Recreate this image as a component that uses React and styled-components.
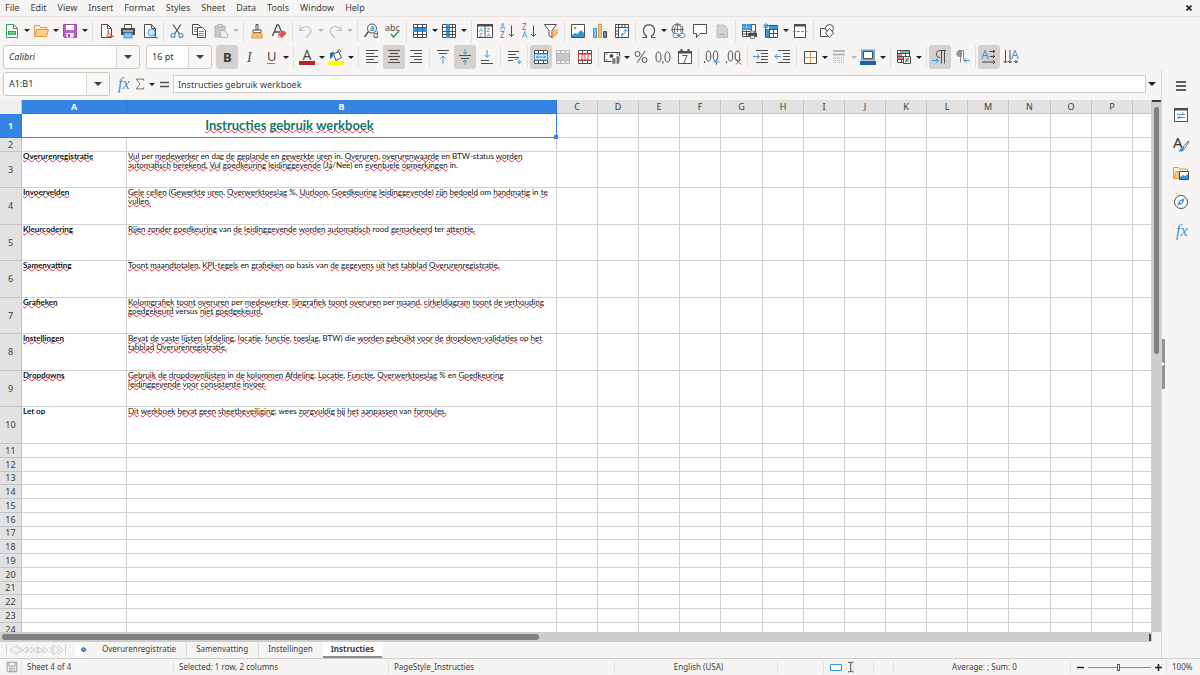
import React from "react";
import styled, { createGlobalStyle, css } from "styled-components";

const INK = "#4d4d4d";
const BLUE = "#3a96d8";
const ORANGE = "#e8973a";
const RED = "#dd3b3b";
const PURPLE = "#a345b8";

const caretPath = "M0 0h6l-3 3z";

// 16x16 drawings, keyed by command
const ICONS = {
  new: (
    <>
      <path d="M2.5 1.5h7l4 4v9h-11z" fill="#fff" stroke="#31a354" />
      <path d="M9.5 1.5v4h4" fill="none" stroke="#31a354" />
      <path d="M4 8h8v4H4z" fill="#31a354" />
      <path d="M5 9.5h6M5 11h6" stroke="#bfe8cb" strokeWidth=".6" />
    </>
  ),
  open: (
    <>
      <path d="M1.5 13.5v-11h5l1 2h6v3" fill="#fdf0dc" stroke={ORANGE} />
      <path d="M3.5 6.5h12l-2 7h-12z" fill="#f8cd8c" stroke={ORANGE} />
    </>
  ),
  save: (
    <>
      <path d="M1.5 1.5h13v13h-12l-1-1z" fill="#b765c9" stroke={PURPLE} />
      <path d="M4 2h8v5H4z" fill="#fff" />
      <path d="M4.5 10h7v4.5h-7z" fill="#fff" />
      <path d="M6 11h2v3H6z" fill={PURPLE} />
    </>
  ),
  pdf: (
    <>
      <path d="M3.5 1.5h6l4 4v9h-10z" fill="#fff" stroke={INK} />
      <path d="M9.5 1.5v4h4" fill="none" stroke={INK} />
      <path d="M7 15c3-2 3.5-5 3-7.5 0 3 2.5 5 5.5 6-3-.6-6 .4-8.500 1.500z" fill="#fff" stroke={RED} />
    </>
  ),
  print: (
    <>
      <path d="M4.500 5V1.500h7V5" fill="#fff" stroke={INK} />
      <path d="M1 5h14v7H1z" fill={INK} />
      <path d="M3 8h10" stroke="#fff" />
      <path d="M4 10h8v5H4z" fill="#8fc8ef" stroke={BLUE} />
    </>
  ),
  preview: (
    <>
      <path d="M2.500 1.500h7l4 4v9h-11z" fill="#fff" stroke={INK} />
      <path d="M9.500 1.500v4h4" fill="none" stroke={INK} />
      <circle cx="9.500" cy="9.500" r="3.500" fill="#cfe8fa" stroke={BLUE} />
      <path d="M12 12l3.500 3.500" stroke={BLUE} strokeWidth="1.400" />
    </>
  ),
  cut: (
    <>
      <path d="M4 1.500l6.500 9.500M12 1.500L5.500 11" fill="none" stroke={INK} strokeWidth="1.200" />
      <circle cx="4" cy="12.500" r="2" fill="none" stroke={BLUE} strokeWidth="1.200" />
      <circle cx="12" cy="12.500" r="2" fill="none" stroke={BLUE} strokeWidth="1.200" />
    </>
  ),
  copy: (
    <>
      <path d="M1.500 1.500h6l2 2v8h-8z" fill="#fff" stroke={INK} />
      <path d="M3 4.500h3M3 6.500h3M3 8.500h3" stroke={BLUE} />
      <path d="M6.500 4.500h5l3 3v7h-8z" fill="#fff" stroke={INK} />
      <path d="M8 8.500h5M8 10.500h5M8 12.500h5" stroke={BLUE} />
    </>
  ),
  paste: (
    <>
      <path d="M2 3h10v11H2z" fill="#c9c9c9" stroke="#b0b0b0" />
      <path d="M5 1.500h4V4H5z" fill="#eee" stroke="#b0b0b0" />
      <path d="M7.500 7.500h4l3 3v4h-7z" fill="#eee" stroke="#b5b5b5" />
    </>
  ),
  brush: (
    <>
      <path d="M7 1.500h2V7H7z" fill="#fff" stroke={INK} />
      <path d="M4 7h8v2.500H4z" fill="#fff" stroke={INK} />
      <path d="M3.500 10h9l1 5h-11z" fill="#f7be78" stroke={ORANGE} />
    </>
  ),
  clear: (
    <>
      <path d="M1.500 13L6 2h1.500L11 10M3 9h6" fill="none" stroke={INK} strokeWidth="1.300" />
      <path d="M7.500 11.500l5-3.500 2.500 2.500-4.500 4z" fill="#e8505b" stroke={RED} />
      <path d="M7.500 11.500l3 3-1 .8H7.500l-1.500-1.500z" fill="#f5b5ba" />
    </>
  ),
  undo: (
    <path d="M2 2.500v5h5M2.500 7C5 3 9 2.500 11.500 5s2 5-3.500 9.500" fill="none" stroke="#c2c2c2" strokeWidth="1.200" />
  ),
  redo: (
    <path d="M14 2.500v5H9M13.500 7C11 3 7 2.500 4.500 5s-2 5 3.500 9.500" fill="none" stroke="#c2c2c2" strokeWidth="1.200" />
  ),
  find: (
    <>
      <circle cx="9" cy="5.500" r="4.500" fill="#fff" stroke={INK} />
      <path d="M5.500 8.500L1.500 14" stroke={INK} strokeWidth="1.500" />
      <text x="6.700" y="8" fontSize="8" fill={BLUE} fontWeight="bold">a</text>
      <text x="10" y="15" fontSize="9" fill={INK}>d</text>
    </>
  ),
  spell: (
    <>
      <text x="0" y="7.500" fontSize="9" fill={INK}>abc</text>
      <path d="M6 11l2.500 3L14 8" fill="none" stroke="#2f9e5b" strokeWidth="1.500" />
    </>
  ),
  row: (
    <>
      <path d="M1.500 1.500h13v13h-13zM5.500 1.500v13M10.500 1.500v13M1.500 4.500h13M1.500 11.500h13" fill="#fff" stroke={INK} />
      <path d="M1 5h14v4H1z" fill={BLUE} />
      <path d="M5.500 5v4M10.500 5v4" stroke="#1e6aa8" />
    </>
  ),
  column: (
    <>
      <path d="M1.500 1.500h13v13h-13zM1.500 4.500h13M1.500 8.500h13M1.500 11.500h13M11.500 1.500v13" fill="#fff" stroke={INK} />
      <path d="M5 1h4v14H5z" fill={BLUE} />
      <path d="M5 4.500h4M5 8.500h4M5 11.500h4" stroke="#1e6aa8" />
    </>
  ),
  sort: (
    <>
      <path d="M.5 1.500h15v13H.5zM8 3v11" fill="#fff" stroke={INK} />
      <path d="M0 1h16v2.500H0z" fill={INK} />
      <text x="2" y="9" fontSize="6" fill={BLUE}>A</text>
      <text x="2" y="14" fontSize="6" fill={PURPLE}>Z</text>
      <text x="9.500" y="9" fontSize="6" fill={PURPLE}>Z</text>
      <text x="9.500" y="14" fontSize="6" fill={BLUE}>A</text>
    </>
  ),
  asc: (
    <>
      <text x="1" y="7" fontSize="8" fill={BLUE}>A</text>
      <text x="1" y="15" fontSize="8" fill={PURPLE}>Z</text>
      <path d="M12.500 2.500v11M10 11l2.500 2.500L15 11" fill="none" stroke={INK} />
    </>
  ),
  desc: (
    <>
      <text x="1" y="7" fontSize="8" fill={PURPLE}>Z</text>
      <text x="1" y="15" fontSize="8" fill={BLUE}>A</text>
      <path d="M12.500 2.500v11M10 11l2.500 2.500L15 11" fill="none" stroke={INK} />
    </>
  ),
  filter: (
    <>
      <path d="M1.500 1.500h12L9 7.500v7l-3-2v-5z" fill="#fff" stroke={INK} />
      <path d="M11 7h4l-2 3h2l-6 5.500 2-4H9z" fill="#f9c67f" stroke={ORANGE} strokeWidth=".7" />
    </>
  ),
  image: (
    <>
      <path d="M1.500 1.500h13v13h-13z" fill="#fff" stroke={INK} />
      <circle cx="5" cy="5" r="1.500" fill={ORANGE} />
      <path d="M2 14v-2l3-2 2 1 4-4 3 3v4z" fill={BLUE} />
    </>
  ),
  chart: (
    <>
      <path d="M1.500 5.500h3v9h-3z" fill="#8cc4ec" stroke={BLUE} />
      <path d="M6.500 1.500h3v13h-3z" fill="#f9c67f" stroke={ORANGE} />
      <path d="M11.500 8.500h3v6h-3z" fill="#888" stroke={INK} />
    </>
  ),
  pivot: (
    <>
      <path d="M1.500 1.500h13v13h-13zM4.500 1.500v13M1.500 4.500h13M8 1.500v3M11 1.500v3M1.500 8h3M1.500 11h3" fill="#fff" stroke={INK} />
      <path d="M7 12c3 0 4.500-1.500 4.500-5M9.500 8.500l2-2 2 2M9 10l-2 2 2 2" fill="none" stroke={BLUE} />
    </>
  ),
  omega: (
    <path d="M1.500 14.500h4v-1.500C.5 9.500 2 1.800 8 1.800S15.500 9.500 10.500 13v1.500h4" fill="none" stroke={INK} strokeWidth="1.200" />
  ),
  link: (
    <>
      <circle cx="7.500" cy="6.500" r="5.500" fill="#fff" stroke={INK} />
      <path d="M7.500 1v8M2 6.500h11M7.500 1c-4 3-4 8-1 11M7.500 1c4 3 4 6 3 8" fill="none" stroke={INK} strokeWidth=".8" />
      <rect x="3" y="10.500" width="6" height="4" rx="2" fill="#fff" stroke={BLUE} />
      <rect x="9" y="10.500" width="6" height="4" rx="2" fill="#fff" stroke={BLUE} />
      <path d="M6.500 12.500h5" stroke={BLUE} />
    </>
  ),
  comment: <path d="M1.500 1.500h13v9H8l-3.500 4v-4h-3z" fill="#fff" stroke={INK} />,
  header: (
    <>
      <path d="M3 2h7l3.500 3.500V14.500H3z" fill="#d2d2d2" stroke="#bcbcbc" />
      <path d="M5 11.500h6" stroke="#aaa" />
    </>
  ),
  printArea: (
    <>
      <path d="M1.500 1.500h13v12h-13zM5.500 1.500v12M10.500 1.500v12M1.500 8.500h13M1.500 11h13" fill="#fff" stroke={INK} />
      <path d="M1 1h9.500v6H1z" fill={BLUE} />
      <path d="M1 4h9.500M5.500 1v6" stroke="#b7dcf5" strokeWidth=".6" />
      <path d="M7 10h9v4H7z" fill={INK} />
      <path d="M9.500 8h4v2h-4zM9.500 12.500h4v3h-4z" fill="#cfe8fa" stroke={INK} strokeWidth=".6" />
    </>
  ),
  freeze: (
    <>
      <path d="M2.500 2.500h12v12h-12zM6.500 2.500v12M10.500 2.500v12M2.500 6.500h12M2.500 10.500h12" fill="#fff" stroke={INK} />
      <path d="M6 3h8.500v3H6zM3 6h3v8.500H3z" fill={BLUE} />
      <path d="M3 0v6M0 3h6M1 1l4 4M5 1L1 5" stroke={BLUE} />
    </>
  ),
  splitWin: (
    <>
      <path d="M2.500 2v12.500h11V2" fill="#fff" stroke={INK} />
      <path d="M2 1h12v2.500H2z" fill={INK} />
      <path d="M1 8.500h14" stroke={BLUE} strokeDasharray="3 1" />
    </>
  ),
  shapes: (
    <>
      <path d="M1.500 5.500h7v8h-7z" fill="#fff" stroke={INK} />
      <circle cx="10.500" cy="5.500" r="4" fill="#fff" stroke={INK} />
      <path d="M10.500 5.500l4 4.500-4 4.500-4-4.500z" fill="#fff" stroke={INK} />
    </>
  ),
  bold: <text x="4" y="13" fontSize="13" fontWeight="bold" fill="#3a3a3a">B</text>,
  italic: <text x="6" y="13" fontSize="14" fontStyle="italic" fontFamily="Liberation Serif, serif" fill={INK}>I</text>,
  underline: (
    <>
      <text x="4" y="12" fontSize="13" fill={INK}>U</text>
      <path d="M4 14.500h8" stroke={BLUE} />
    </>
  ),
  fontColor: (
    <>
      <text x="3.500" y="10.500" fontSize="14" fill={INK}>A</text>
      <path d="M0 12h16v4H0z" fill="#c02020" />
    </>
  ),
  highlight: (
    <>
      <path d="M5.500 5l5-2.500 3 6-5.500 3z" fill="#fff" stroke={INK} />
      <path d="M10 4V2c0-2 3-1.500 3 1" fill="none" stroke={INK} />
      <path d="M2 10V4l4-1.500L4.500 8z" fill="#1e6aa8" />
      <path d="M0 12h16v4H0z" fill="#ffff00" />
    </>
  ),
  alignLeft: <path d="M2 1.500h12M2 4.500h8M2 7.500h12M2 10.500h8M2 13.500h12" stroke={INK} />,
  alignCenter: <path d="M2 1.500h12M4 4.500h8M2 7.500h12M4 10.500h8M2 13.500h12" stroke={INK} />,
  alignRight: <path d="M2 1.500h12M6 4.500h8M2 7.500h12M6 10.500h8M2 13.500h12" stroke={INK} />,
  alignTop: (
    <>
      <path d="M2 1.500h12M4 4.500h8" stroke={INK} />
      <path d="M8 14.500V7M5.500 9.500L8 7l2.500 2.500" fill="none" stroke={BLUE} />
    </>
  ),
  alignMiddle: (
    <>
      <path d="M2 6.500h12M4 9.500h8" stroke={INK} />
      <path d="M8 0v5M6 3l2 2 2-2M8 16v-5M6 13l2-2 2 2" fill="none" stroke={BLUE} />
    </>
  ),
  alignBottom: (
    <>
      <path d="M2 14.500h12M2 11.500h8" stroke={INK} />
      <path d="M8 1v7M5.500 6L8 8.500 10.500 6" fill="none" stroke={BLUE} />
    </>
  ),
  wrap: (
    <>
      <path d="M2 2.500h11M2 5.500h8M2 8.500h11M2 11.500h5" stroke={INK} />
      <path d="M8.500 10.500c4-1 5 0 5 4M11 12.500l2.500 2 2-2.500" fill="none" stroke={BLUE} />
    </>
  ),
  merge: (
    <>
      <path d="M1.500 1.500h13v13h-13zM5.500 1.500v3M10.500 1.500v3M5.500 11.500v3M10.500 11.500v3M1.500 4.500h13M1.500 11.500h13" fill="#fff" stroke={INK} />
      <path d="M1.500 5h13v6h-13z" fill="#d8edfb" stroke={BLUE} />
      <path d="M3 8h10M5 6.500L3.500 8 5 9.500M11 6.500L12.500 8 11 9.500" fill="none" stroke={BLUE} />
    </>
  ),
  unmerge: (
    <>
      <path d="M1.500 1.500h13v13h-13zM5.500 1.500v3M10.500 1.500v3M5.500 11.500v3M10.500 11.500v3M1.500 4.500h13M1.500 11.500h13" fill="#eee" stroke="#b5b5b5" />
      <path d="M2 5h12v6H2z" fill="#c8c8c8" />
    </>
  ),
  splitCells: (
    <>
      <path d="M1.500 1.500h13v13h-13zM5.500 1.500v13M10.500 1.500v13M1.500 4.500h13M1.500 11.500h13" fill="#fff" stroke={INK} />
      <path d="M1.500 5h13v6h-13zM5 5v6M8 5v6M11 5v6" fill="#fff" stroke={RED} />
    </>
  ),
  currency: (
    <>
      <path d="M.5 3.500h15v9H.5z" fill="#fff" stroke={INK} strokeWidth="1.200" />
      <path d="M2 5h1.500M12.500 5H14M2 11h1.500" stroke={INK} />
      <circle cx="7.500" cy="7" r="2" fill={INK} />
      <path d="M8 9h4v6H8zM12 7h3.500v8H12z" fill="#777" stroke="#f6f5f4" strokeWidth=".6" />
    </>
  ),
  percent: (
    <>
      <circle cx="4.500" cy="5" r="2.500" fill="none" stroke={INK} />
      <circle cx="11.500" cy="11" r="2.500" fill="none" stroke={INK} />
      <path d="M12 2L4 14" stroke={INK} />
    </>
  ),
  number: (
    <>
      <ellipse cx="3.500" cy="8" rx="2.500" ry="5" fill="none" stroke={INK} />
      <ellipse cx="12.500" cy="8" rx="2.500" ry="5" fill="none" stroke={INK} />
      <path d="M8 12v2.500" stroke={INK} />
    </>
  ),
  date: (
    <>
      <path d="M1.500 2.500h13v12h-13z" fill="#fff" stroke={INK} />
      <path d="M1 2h14v2.500H1zM3.500 0h2v3h-2zM10.500 0h2v3h-2z" fill={INK} />
      <text x="5" y="13.500" fontSize="10" fill={INK}>7</text>
    </>
  ),
  addDec: (
    <>
      <path d="M.5 12v2" stroke={INK} />
      <ellipse cx="4.500" cy="7" rx="2.300" ry="5" fill="none" stroke={INK} />
      <ellipse cx="11.500" cy="7" rx="2.300" ry="5" fill="none" stroke={INK} />
      <path d="M12.500 10v6M9.500 13h6" stroke={BLUE} />
    </>
  ),
  delDec: (
    <>
      <path d="M.5 12v2" stroke={INK} />
      <ellipse cx="4.500" cy="7" rx="2.300" ry="5" fill="none" stroke={INK} />
      <ellipse cx="11.500" cy="7" rx="2.300" ry="5" fill="none" stroke={INK} />
      <path d="M10 10l5 5.500M15 10l-5 5.500" stroke={RED} />
    </>
  ),
  indent: (
    <>
      <path d="M3 1.500h12M8 4.500h7M8 7.500h7M8 10.500h7M3 13.500h12" stroke={INK} />
      <path d="M0 7.500h6M4 5l2.500 2.500L4 10" fill="none" stroke={BLUE} />
    </>
  ),
  outdent: (
    <>
      <path d="M3 1.500h12M8 4.500h7M8 7.500h7M8 10.500h7M3 13.500h12" stroke={INK} />
      <path d="M6 7.500H0M2.500 5L0 7.500 2.500 10" fill="none" stroke={BLUE} />
    </>
  ),
  borders: (
    <>
      <path d="M2.500 2.500h12v12h-12z" fill="#fff" stroke={INK} />
      <path d="M8.500 3v11M3 8.500h11" stroke={ORANGE} />
    </>
  ),
  lineStyle: (
    <>
      <path d="M2 2h12M2 5.500h12" stroke="#b5b5b5" strokeWidth="2" />
      <path d="M2 9h12" stroke="#b5b5b5" strokeDasharray="3 1" />
      <path d="M2 11.500h12M2 13.500h12" stroke="#b5b5b5" strokeDasharray="1 1" />
    </>
  ),
  lineColor: (
    <>
      <path d="M2 1.500h12v9H2z" fill="#fff" stroke="#6aa5d6" strokeWidth="2" />
      <path d="M3.500 2.500h9v7h-9z" fill="#fff" stroke={INK} />
      <path d="M0 12h16v4H0z" fill="#1f5f9e" />
    </>
  ),
  conditional: (
    <>
      <path d="M1.500 1.500h12v12h-12zM5.500 1.500v12M9.500 1.500v12M1.500 4.500h12M1.500 7.500h12M1.500 10.500h12" fill="#fff" stroke={INK} />
      <path d="M4 2h9v2H4z" fill="#6cc08b" />
      <path d="M2 5h4v2H2zM2 8h5v2H2z" fill="#ef7d7d" />
      <path d="M7.500 7.500h7v7h-7z" fill="#fff" stroke={INK} />
      <path d="M9 10h4M9 12h4M12.500 8.500l-3 5" stroke={INK} strokeWidth=".8" />
    </>
  ),
  ltr: (
    <>
      <path d="M8 8.500c-5 0-5-7 0-7h6M9.500 1.500v13M12.500 1.500v13" fill="none" stroke={INK} />
      <path d="M0 11.500h6M4 9l2.500 2.500L4 14" fill="none" stroke={BLUE} />
    </>
  ),
  rtl: (
    <>
      <path d="M6 8C1 8 1 1.500 6 1.500h2V8z" fill="#999" />
      <path d="M4 1.500h6M6.500 1.500v12M9.500 1.500v9" fill="none" stroke="#8a8a8a" />
      <path d="M16 11.500h-6M12.500 9L10 11.500l2.500 2.500" fill="none" stroke={BLUE} />
    </>
  ),
  textLtr: (
    <>
      <text x="0" y="10" fontSize="12" fill={BLUE}>A</text>
      <path d="M8.500 2.500H14M12 1l2 1.500L12 4M8.500 7.500H14M12 6l2 1.500L12 9M1 13h13M12 11l2 2-2 2" fill="none" stroke={INK} />
    </>
  ),
  textTtb: (
    <>
      <text x="8" y="10" fontSize="12" fill={BLUE}>A</text>
      <path d="M2.500 1v13M.5 12l2 2 2-2M7 1v13M5 12l2 2 2-2M13 11v3M11 12l2 2 2-2" fill="none" stroke={INK} />
    </>
  ),
  fx: (
    <text x="3" y="13" fontSize="16" fontStyle="italic" fontFamily="Liberation Serif, serif" fill={BLUE}>fx</text>
  ),
  sigma: <path d="M13 3.500v-2H3L8 8l-5 6.500h10v-2" fill="none" stroke={INK} />,
  equals: <path d="M4 6.500h9M4 10.500h9" stroke={INK} strokeWidth="1.600" />,
  burger: <path d="M3 4h10M3 8h10M3 12h10" stroke="#2e2e2e" strokeWidth="1.600" />,
  properties: (
    <>
      <path d="M1.500 1.500h13v13h-13z" fill="#fff" stroke={INK} />
      <path d="M1 1h14v2.500H1z" fill={INK} />
      <path d="M4 7.500h8M4 10.500h8M10 5.500l-1 3M7 9l-1.500 3" stroke={BLUE} />
    </>
  ),
  stylist: (
    <>
      <text x="0" y="12" fontSize="15" fill="#333">A</text>
      <path d="M15.500 5L10 11l1.500 1.500L16 6z" fill="#fff" stroke={INK} strokeWidth=".8" />
      <path d="M5 15c2 0 2-3 4.500-3.500l2 2C10 16 7 16 5 15z" fill={BLUE} />
    </>
  ),
  gallery: (
    <>
      <path d="M.5 13.500v-11h5l1 1.500h8v3" fill="#fdf0dc" stroke={ORANGE} />
      <path d="M1 13.500l2-7h3v7z" fill="#f8cd8c" stroke={ORANGE} />
      <path d="M6.500 6.500h9v8h-9z" fill="#fff" stroke={INK} />
      <path d="M7 14v-2l3-2 2 1 3-2v5z" fill={BLUE} />
    </>
  ),
  navigator: (
    <>
      <circle cx="8" cy="8" r="6.500" fill="#fff" stroke={INK} />
      <path d="M12 4L9.500 9.500 4 12l2.500-5.500z" fill={BLUE} />
      <circle cx="8" cy="8" r="1" fill="#fff" />
    </>
  ),
  addSheet: (
    <>
      <path d="M1 1h9l3 3v11H1z" fill="#fff" />
      <path d="M11 4.500v6M8 7.500h6M9 5.500l4 4M13 5.500l-4 4" stroke="#2d62b5" strokeWidth="1.300" />
      <circle cx="11" cy="7.500" r=".9" fill="#fff" />
    </>
  ),
  saved: (
    <path d="M2.500 2.500h11v11h-10l-1-1zM4.500 2.500V7h7V2.500M5.500 13.500v-4h5v4M7.500 11v2.500" fill="none" stroke="#8f8f8f" />
  ),
  selMode: <path d="M1.500 5.500h11v6h-11z" fill="#fff" stroke={BLUE} />,
  cursor: <path d="M3.500 2.500h2l1 1 1-1h2M6.500 3v10M3.500 13.500h2l1-1 1 1h2" fill="none" stroke="#333" />,
};

const Icon = ({ name, size = 16 }) => (
  <Glyph width={size} height={size} viewBox="0 0 16 16" aria-hidden="true">
    {ICONS[name]}
  </Glyph>
);

const Caret = () => (
  <svg width="6" height="3" viewBox="0 0 6 3" aria-hidden="true">
    <path d={caretPath} fill="currentColor" />
  </svg>
);

// trailing ">" adds a drop-down arrow, "!" marks a pressed button, "~" a disabled one
const STANDARD_BAR =
  "new> open> save> | pdf print preview | cut copy paste~> | brush clear | undo~> redo~> | find spell | row> column> | sort asc desc filter | image chart pivot | omega> link comment header~ | printArea freeze> splitWin | shapes";
const FORMAT_BAR =
  "bold! italic underline> | fontColor> highlight> | alignLeft alignCenter! alignRight | alignTop alignMiddle! alignBottom | wrap | merge! unmerge~ splitCells | currency> percent number date | addDec delDec | indent outdent | borders> lineStyle~> lineColor> | conditional> | ltr! rtl | textLtr! textTtb";

const Tools = ({ spec }) =>
  spec.split(" ").map((item, i) => {
    if (item === "|") return <Separator key={i} />;
    const name = item.replace(/[^a-z]/gi, "");
    const off = item.includes("~");
    return (
      <React.Fragment key={i}>
        <ToolButton aria-label={name} $on={item.includes("!")} disabled={off}>
          <Icon name={name} />
        </ToolButton>
        {item.includes(">") && (
          <ArrowButton aria-label={`${name} options`} disabled={off}>
            <Caret />
          </ArrowButton>
        )}
      </React.Fragment>
    );
  });

const MENUS = ["File", "Edit", "View", "Insert", "Format", "Styles", "Sheet", "Data", "Tools", "Window", "Help"];
const TABS = ["Overurenregistratie", "Samenvatting", "Instellingen", "Instructies"];
const LETTERS = "CDEFGHIJKLMNOP".split("");
const WIDE = ["G", "N"];

const HELP_ROWS = [
  ["Overurenregistratie", "Vul per medewerker en dag de geplande en gewerkte uren in. Overuren, overurenwaarde en BTW-status worden\nautomatisch berekend. Vul goedkeuring leidinggevende (Ja/Nee) en eventuele opmerkingen in."],
  ["Invoervelden", "Gele cellen (Gewerkte uren, Overwerktoeslag %, Uurloon, Goedkeuring leidinggevende) zijn bedoeld om handmatig in te\nvullen."],
  ["Kleurcodering", "Rijen zonder goedkeuring van de leidinggevende worden automatisch rood gemarkeerd ter attentie."],
  ["Samenvatting", "Toont maandtotalen, KPI-tegels en grafieken op basis van de gegevens uit het tabblad Overurenregistratie."],
  ["Grafieken", "Kolomgrafiek toont overuren per medewerker, lijngrafiek toont overuren per maand, cirkeldiagram toont de verhouding\ngoedgekeurd versus niet goedgekeurd."],
  ["Instellingen", "Bevat de vaste lijsten (afdeling, locatie, functie, toeslag, BTW) die worden gebruikt voor de dropdown-validaties op het\ntabblad Overurenregistratie."],
  ["Dropdowns", "Gebruik de dropdownlijsten in de kolommen Afdeling, Locatie, Functie, Overwerktoeslag % en Goedkeuring\nleidinggevende voor consistente invoer."],
  ["Let op", "Dit werkboek bevat geen sheetbeveiliging; wees zorgvuldig bij het aanpassen van formules."],
];

// words the English spell checker accepts
const KNOWN = ["per", "en", "dag", "in", "in.", "van", "om", "op", "basis", "ter", "rood", "Nee", "versus", "BTW-status", "BTW", "die", "wees", "Let"];

const Checked = ({ text }) =>
  text
    .split(/([A-Za-z-]+\.?)/)
    .map((part, i) => (i % 2 && !KNOWN.includes(part) ? <Misspelt key={i}>{part}</Misspelt> : part));

const Fill = () => (
  <>
    {LETTERS.map(l => (
      <Cell key={l} />
    ))}
    <Cell />
  </>
);

const Sheet = () => (
  <Grid>
    <colgroup>
      <Col $w={22} />
      <Col $w={105} />
      <Col $w={430} />
      {LETTERS.map(l => (
        <Col key={l} $w={WIDE.includes(l) ? 42 : 41} />
      ))}
      <col />
    </colgroup>
    <thead>
      <Row $h={14}>
        <Corner />
        <Head $on>A</Head>
        <Head $on>B</Head>
        {LETTERS.map(l => (
          <Head key={l}>{l}</Head>
        ))}
        <Head />
      </Row>
    </thead>
    <tbody>
      <Row $h={24}>
        <Head $on>1</Head>
        <TitleCell colSpan={2}>
          <Checked text="Instructies gebruik werkboek" />
          <FillHandle />
        </TitleCell>
        <Fill />
      </Row>
      <Row $h={14}>
        <Head>2</Head>
        <Cell />
        <Cell />
        <Fill />
      </Row>
      {HELP_ROWS.map(([label, text], i) => (
        <Row key={label} $h={i % 2 ? 37 : 36}>
          <Head>{i + 3}</Head>
          <Cell $bold>
            {label === "Let op" ? label : <Checked text={label} />}
          </Cell>
          <Cell>
            <Checked text={text} />
          </Cell>
          <Fill />
        </Row>
      ))}
      {Array.from({ length: 14 }, (_, i) => (
        <Row key={i} $h={i % 4 === 2 ? 13 : 14}>
          <Head>{i + 11}</Head>
          <Cell />
          <Cell />
          <Fill />
        </Row>
      ))}
    </tbody>
  </Grid>
);

const App = () => (
  <Window>
    <GlobalStyle />
    <MenuBar>
      {MENUS.map(m => (
        <MenuItem key={m}>{m}</MenuItem>
      ))}
      <CloseButton aria-label="Close document">
        <svg width="6" height="6" viewBox="0 0 6 6">
          <path d="M.5.5l5 5M5.500.5l-5 5" stroke="#222" strokeWidth="1.600" />
        </svg>
      </CloseButton>
    </MenuBar>
    <Toolbar>
      <Tools spec={STANDARD_BAR} />
    </Toolbar>
    <FormatToolbar>
      <Combo $w={137}>
        <ComboInput aria-label="Font name" defaultValue="Calibri" $italic />
        <ComboArrow aria-label="Font list"><Caret /></ComboArrow>
      </Combo>
      <Combo $w={66}>
        <ComboInput aria-label="Font size" defaultValue="16 pt" />
        <ComboArrow aria-label="Size list"><Caret /></ComboArrow>
      </Combo>
      <Tools spec={FORMAT_BAR} />
    </FormatToolbar>
    <Body>
      <Main>
        <FormulaBar>
          <Combo $w={107}>
            <ComboInput aria-label="Name box" defaultValue="A1:B1" />
            <ComboArrow aria-label="Names"><Caret /></ComboArrow>
          </Combo>
          <FormulaTools>
            <FormulaButton aria-label="Function wizard"><Icon name="fx" /></FormulaButton>
            <FormulaButton aria-label="Select function"><Icon name="sigma" size={12} /></FormulaButton>
            <ArrowButton aria-label="Functions"><Caret /></ArrowButton>
            <FormulaButton aria-label="Formula"><Icon name="equals" /></FormulaButton>
          </FormulaTools>
          <FormulaInput aria-label="Input line" defaultValue="Instructies gebruik werkboek" />
          <ExpandButton aria-label="Expand formula bar"><Caret /></ExpandButton>
        </FormulaBar>
        <SheetArea>
          <SheetView>
            <Sheet />
          </SheetView>
          <VScroll>
            <VThumb />
          </VScroll>
        </SheetArea>
        <HScroll>
          <HThumb />
          <HStop />
        </HScroll>
        <TabBar>
          <Navs>
            <svg width="62" height="12" viewBox="0 0 62 12" fill="none" stroke="#cfcfcf" aria-hidden="true">
              <path d="M1.500 1v10M12 1L5 6l7 5V8h3V4h-3zM16 3v6M22 3l-5 3 5 3zM27 3l-5 3 5 3zM33 3l-5 3 5 3zM33 3l5 3-5 3zM38 3l5 3-5 3zM46 3v6M48 1l7 5-7 5zM53 1l5 5-5 5M60.500 1v10" />
            </svg>
          </Navs>
          <AddSheet aria-label="Add sheet"><Icon name="addSheet" size={14} /></AddSheet>
          {TABS.map(t => (
            <Tab key={t} $on={t === "Instructies"}>{t}</Tab>
          ))}
        </TabBar>
      </Main>
      <Splitter>
        <SplitterHandle aria-label="Hide sidebar">
          <svg width="3" height="4" viewBox="0 0 3 4"><path d="M0 0l3 2-3 2z" fill="#fff" /></svg>
        </SplitterHandle>
      </Splitter>
      <Sidebar>
        {["burger", "properties", "stylist", "gallery", "navigator", "fx"].map(n => (
          <SideButton key={n} aria-label={n}><Icon name={n} /></SideButton>
        ))}
      </Sidebar>
    </Body>
    <StatusBar>
      <Status $w={22}><Icon name="saved" size={14} /></Status>
      <Status $w={152}>Sheet 4 of 4</Status>
      <Status $w={215}>Selected: 1 row, 2 columns</Status>
      <Status $grow>PageStyle_Instructies</Status>
      <Status $w={163} $center>English (USA)</Status>
      <Status $w={46} />
      <Status $w={30}><Icon name="selMode" /><Icon name="cursor" size={14} /></Status>
      <Status $w={20} />
      <Status $w={20} />
      <Status $w={177} $center>Average: ; Sum: 0</Status>
      <ZoomStatus $w={96}>
        <ZoomStep aria-label="Zoom out">
          <svg width="7" height="7" viewBox="0 0 7 7"><path d="M0 3.500h7" stroke="#222" strokeWidth="1.500" /></svg>
        </ZoomStep>
        <ZoomSlider type="range" aria-label="Zoom" min="0" max="100" defaultValue="48" />
        <ZoomStep aria-label="Zoom in">
          <svg width="7" height="7" viewBox="0 0 7 7"><path d="M0 3.500h7M3.500 0v7" stroke="#222" strokeWidth="1.500" /></svg>
        </ZoomStep>
      </ZoomStatus>
      <Status $w={33} $last>100%</Status>
    </StatusBar>
  </Window>
);

export default App;

const GlobalStyle = createGlobalStyle`
  * {
    box-sizing: border-box;
  }

  body {
    margin: 0;
    background: #f6f5f4;
  }

  button,
  input {
    font: inherit;
    color: inherit;
    margin: 0;
    padding: 0;
    border: 0;
    background: none;
    outline: none;
  }
`;

const Window = styled.div`
  display: flex;
  flex-direction: column;
  height: 100vh;
  overflow: hidden;
  background: #f6f5f4;
  color: #3d3d3d;
  font-family: "Noto Sans", sans-serif;
  font-size: 9px;
  line-height: 12px;
`;

const Glyph = styled.svg`
  display: block;
  flex: none;
  overflow: visible;
  font-family: "Noto Sans", sans-serif;
`;

const MenuBar = styled.nav`
  display: flex;
  flex: none;
  gap: 1px;
  height: 17px;
  padding: 0 8px 0 0;
  border-bottom: 1px solid #e6e4e2;
`;

const MenuItem = styled.button`
  padding: 0 5px;
`;

const CloseButton = styled.button`
  display: flex;
  align-items: center;
  margin-left: auto;
`;

const Toolbar = styled.div`
  display: flex;
  flex: none;
  align-items: center;
  height: 27px;
  padding-left: 1px;
`;

const FormatToolbar = styled(Toolbar)`
  height: 26px;
`;

const ToolButton = styled.button`
  display: flex;
  flex: none;
  align-items: center;
  justify-content: center;
  width: 22px;
  height: 24px;
  border-radius: 3px;
  background: ${p => (p.$on ? "#d5d1ce" : "transparent")};
`;

const ArrowButton = styled.button`
  display: flex;
  flex: none;
  align-items: center;
  justify-content: center;
  width: 7px;
  height: 24px;
  color: #1f1f1f;

  &:disabled {
    color: #b8b8b8;
  }
`;

const Separator = styled.span`
  flex: none;
  width: 1px;
  height: 22px;
  margin: 0 2px;
  background: #e2e0de;

  ${ArrowButton} + & {
    margin-left: 4px;
  }
`;

const Combo = styled.div`
  display: flex;
  flex: none;
  width: ${p => p.$w}px;
  height: 24px;
  margin: 0 4px 0 2px;
  border: 1px solid #cdc7c2;
  border-radius: 3px;
  background: #fff;
`;

const ComboInput = styled.input`
  flex: 1;
  min-width: 0;
  padding-left: 5px;
  color: #2e3436;
  font-style: ${p => (p.$italic ? "italic" : "normal")};
`;

const ComboArrow = styled.button`
  display: flex;
  align-items: center;
  justify-content: center;
  width: 23px;
  border-left: 1px solid #dcd8d5;
  border-radius: 0 3px 3px 0;
  background: #f8f7f6;

  svg {
    width: 8px;
    height: 4px;
  }
`;

const Body = styled.div`
  display: flex;
  flex: 1;
  min-height: 0;
`;

const Main = styled.main`
  display: flex;
  flex: 1;
  flex-direction: column;
  min-width: 0;
`;

const FormulaBar = styled.div`
  display: flex;
  flex: none;
  align-items: center;
  height: 30px;
  padding: 0 4px 2px 1px;
`;

const FormulaTools = styled.div`
  display: flex;
  align-items: center;
  margin-right: 1px;
`;

const FormulaButton = styled.button`
  display: flex;
  align-items: center;
  justify-content: center;
  width: 17px;
  height: 24px;
`;

const FormulaInput = styled.input`
  flex: 1;
  min-width: 0;
  height: 18px;
  padding: 0 4px;
  border: 1px solid #cfcfcf;
  background: #fff;
`;

const ExpandButton = styled(ArrowButton)`
  width: 11px;

  svg {
    width: 8px;
    height: 4px;
  }
`;

const SheetArea = styled.div`
  display: flex;
  flex: 1;
  min-height: 0;
`;

const SheetView = styled.div`
  flex: 1;
  min-width: 0;
  overflow: hidden;
  background: #fff;
`;

const Grid = styled.table`
  width: 100%;
  table-layout: fixed;
  border-collapse: separate;
  border-spacing: 0;
`;

const Col = styled.col`
  width: ${p => p.$w}px;
`;

const Row = styled.tr`
  height: ${p => p.$h}px;
`;

const Head = styled.th`
  padding: 0;
  overflow: hidden;
  border-right: 1px solid #c4c4c4;
  border-bottom: 1px solid #c4c4c4;
  background: #e2e2e2;
  font-weight: normal;
  line-height: 12px;
  text-align: center;

  ${p =>
    p.$on &&
    css`
      border-color: #2f76cc;
      background: #3584e4;
      color: #fff;
      font-weight: bold;
    `}
`;

const Corner = styled.td`
  padding: 0;
  border-right: 1px solid #c4c4c4;
  background: #f0efee;
`;

const Cell = styled.td`
  padding: 0 0 0 1px;
  border-right: 1px solid #d0d0d0;
  border-bottom: 1px solid #d0d0d0;
  color: #111;
  font-family: Lato, Carlito, sans-serif;
  font-size: 8px;
  font-weight: ${p => (p.$bold ? "bold" : "normal")};
  line-height: 9px;
  vertical-align: top;
  white-space: pre;
`;

const TitleCell = styled(Cell)`
  position: relative;
  border-color: #3584e4;
  color: #13786a;
  font-size: 13px;
  font-weight: bold;
  line-height: 22px;
  text-align: center;
`;

const FillHandle = styled.span`
  position: absolute;
  right: -2px;
  bottom: -2px;
  width: 4px;
  height: 4px;
  background: #3584e4;
`;

const Misspelt = styled.span`
  text-decoration: underline wavy #e0303a 1px;
  text-decoration-skip-ink: none;
  text-underline-offset: -1px;
`;

const VScroll = styled.div`
  width: 9px;
  padding: 5px 2px 0;
  border-top: 2px solid #3d3d3d;
  background: #cdcdcd;
`;

const VThumb = styled.div`
  height: 47%;
  border-radius: 3px;
  background: #7f7f7d;
`;

const HScroll = styled.div`
  display: flex;
  flex: none;
  align-items: center;
  justify-content: space-between;
  height: 10px;
  margin-right: 9px;
  padding: 0 1px 0 2px;
  background: #cdcdcd;
`;

const HThumb = styled.div`
  width: 46.7%;
  height: 6px;
  border-radius: 3px;
  background: #7f7f7d;
`;

const HStop = styled.span`
  width: 2px;
  height: 7px;
  background: #4a4a4a;
`;

const TabBar = styled.div`
  display: flex;
  flex: none;
  height: 16px;
  font-size: 8px;
`;

const Navs = styled.div`
  display: flex;
  align-items: center;
  width: 74px;
  padding-left: 5px;
`;

const AddSheet = styled.button`
  display: flex;
  align-items: center;
  width: 18px;
`;

const Tab = styled.button`
  padding: 0 10px;
  border-bottom: 2px solid transparent;
  box-shadow: 1px 0 0 #dedcda;

  ${p =>
    p.$on &&
    css`
      padding: 0 8px;
      border-bottom-color: #8c8c8c;
      background: #fff;
      box-shadow: none;
      font-weight: bold;
    `}
`;

const Splitter = styled.div`
  display: flex;
  align-items: center;
  width: 4px;
  border-left: 1px solid #d6d4d2;
`;

const SplitterHandle = styled.button`
  display: flex;
  align-items: center;
  width: 4px;
  height: 50px;
  background: #929292;
`;

const Sidebar = styled.aside`
  display: flex;
  flex-direction: column;
  gap: 5px;
  width: 35px;
  padding: 4px 3px 0 0;
`;

const SideButton = styled.button`
  display: flex;
  align-items: center;
  justify-content: center;
  height: 24px;
`;

const StatusBar = styled.footer`
  display: flex;
  flex: none;
  align-items: center;
  height: 17px;
  border-top: 1px solid #cfcdcb;
  font-size: 8px;
`;

const Status = styled.div`
  display: flex;
  flex: ${p => (p.$grow ? "1" : "none")};
  align-items: center;
  justify-content: ${p => (p.$center ? "center" : "flex-start")};
  width: ${p => (p.$w ? `${p.$w}px` : "auto")};
  height: 13px;
  padding-left: 5px;
  border-right: 1px solid ${p => (p.$last ? "transparent" : "#e2e0de")};
  white-space: nowrap;
`;

const ZoomStatus = styled(Status)`
  padding: 0 4px 0 6px;
`;

const ZoomStep = styled.button`
  display: flex;
  align-items: center;
`;

const ZoomSlider = styled.input`
  appearance: none;
  flex: 1;
  min-width: 0;
  height: 9px;
  margin: 0 4px;
  background: linear-gradient(#8a8a8a, #8a8a8a) center / 100% 1px no-repeat;

  &::-webkit-slider-thumb {
    appearance: none;
    width: 3px;
    height: 7px;
    border: 1px solid #555;
    background: #fff;
  }
`;
